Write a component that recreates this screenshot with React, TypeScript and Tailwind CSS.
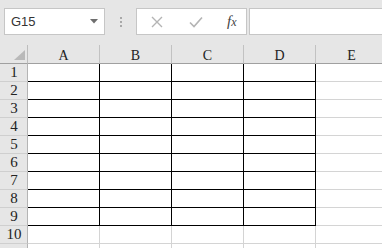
import { Fragment } from 'react'

const cols = ['A', 'B', 'C', 'D', 'E']
const rows = [1, 2, 3, 4, 5, 6, 7, 8, 9, 10, 11]

const serif = { fontFamily: '"Liberation Serif", "Noto Sans CJK SC", serif' }

export default function App() {
  return (
    <div className="w-[382px] h-[248px] overflow-hidden bg-white">
      {/* 편집 줄 */}
      <div className="h-[45px] bg-[#e6e6e6] flex items-start pt-[8px] pl-[4px]">
        <div className="w-[101px] h-[27px] shrink-0 bg-white border border-[#c6c6c6] flex items-center pl-[6px] pr-[6px]">
          <span
            className="text-[13px] text-[#333] flex-1"
            style={{ fontFamily: '"Liberation Sans", Arial, sans-serif' }}
          >
            G15
          </span>
          <svg width="8" height="5" viewBox="0 0 8 5">
            <polygon points="0,0 8,0 4,4.5" fill="#6e6e6e" />
          </svg>
        </div>
        <div className="w-[31px] h-[27px] shrink-0 flex flex-col items-center justify-center gap-[2px]">
          <span className="w-[2px] h-[2px] bg-[#a8a8a8]" />
          <span className="w-[2px] h-[2px] bg-[#a8a8a8]" />
          <span className="w-[2px] h-[2px] bg-[#a8a8a8]" />
        </div>
        <div className="w-[111px] h-[27px] shrink-0 bg-white border border-[#c6c6c6] flex items-center">
          <svg width="12" height="12" viewBox="0 0 12 12" className="ml-[14px]">
            <path d="M1 1 L11 11 M11 1 L1 11" stroke="#b4b4b4" strokeWidth="1.4" />
          </svg>
          <svg width="14" height="12" viewBox="0 0 14 12" className="ml-[26px]">
            <path d="M1 6.5 L5 10.5 L13 1.5" stroke="#b4b4b4" strokeWidth="1.6" fill="none" />
          </svg>
          <span
            className="ml-[24px] italic text-[15px] text-[#444] leading-none"
            style={{ fontFamily: '"Liberation Serif", "Times New Roman", serif' }}
          >
            f<span className="text-[12px]">x</span>
          </span>
        </div>
        <div className="ml-[2px] w-[140px] h-[27px] shrink-0 bg-white border border-[#c6c6c6]" />
      </div>

      {/* 시트 */}
      <div className="grid grid-cols-[28px_repeat(5,72px)] w-[388px]" style={serif}>
        <div className="h-[19px] bg-[#e6e6e6] border-r border-b border-r-[#bdbdbd] border-b-[#a0a0a0] flex items-end justify-end pr-[2px] pb-[3px]">
          <svg width="11" height="10" viewBox="0 0 11 10">
            <polygon points="11,0 11,10 0,10" fill="#b9b9b9" />
          </svg>
        </div>
        {cols.map((c) => (
          <div
            key={c}
            className="h-[19px] bg-[#e6e6e6] border-b border-b-[#a0a0a0] border-r border-r-[#c2c2c2] flex items-center justify-center pt-[3px] text-[14px] text-[#222]"
          >
            {c}
          </div>
        ))}
        {rows.map((r) => (
          <Fragment key={r}>
            <div className="h-[18px] bg-[#e6e6e6] border-r border-r-[#b4b4b4] border-b border-b-[#cfcfcf] flex items-center justify-center text-[15px] text-[#222] pl-[1px]">
              {r <= 10 ? r : ''}
            </div>
            {cols.map((c, i) => {
              const inTable = i < 4 && r <= 9
              return (
                <div
                  key={c}
                  className={
                    inTable
                      ? 'h-[18px] border-r border-b border-black'
                      : 'h-[18px] border-r border-b border-[#d4d4d4]'
                  }
                />
              )
            })}
          </Fragment>
        ))}
      </div>
    </div>
  )
}
